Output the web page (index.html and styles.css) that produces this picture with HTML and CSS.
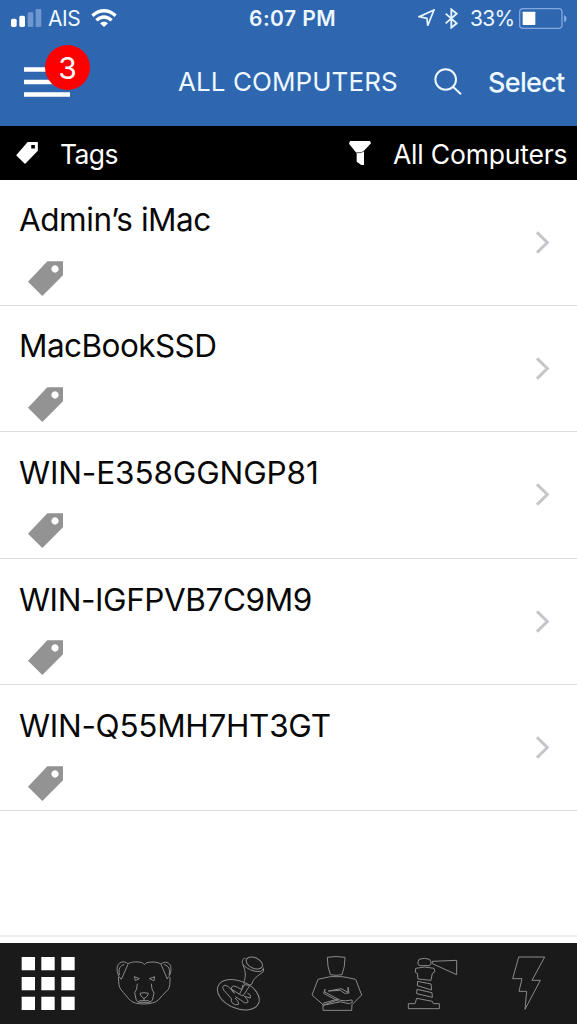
FILE: index.html
```html
<!DOCTYPE html>
<html lang="en">
<head>
<meta charset="utf-8">
<title>All Computers</title>
<link rel="stylesheet" href="styles.css">
</head>
<body>
<svg class="defs" width="0" height="0" aria-hidden="true">
  <symbol id="tag" viewBox="0 0 105 105"><path fill-rule="evenodd" d="M58 1H105V43L43 105L0 62ZM81 13a11 11 0 1 0 .1 0Z"/></symbol>
  <symbol id="chevron" viewBox="0 0 42 69"><path d="M3 4L34 34.500L3 65" fill="none" stroke="#c5c5ca" stroke-width="9"/></symbol>
</svg>
<div class="screen">
  <header class="header">
    <div class="status">
      <div class="status-left">
        <svg class="signal" viewBox="0 0 93 54"><rect y="29" width="17" height="25" rx="5" fill="#fff"/><rect x="25" y="20" width="17" height="34" rx="5" fill="#fff"/><rect x="50" y="10" width="17" height="44" rx="4" fill="#6f97cf"/><rect x="74" width="17" height="54" rx="4" fill="#6f97cf"/></svg>
        <span class="carrier">AIS</span>
        <svg class="wifi" viewBox="0 0 78 54"><g fill="none" stroke="#fff" stroke-width="10"><path d="M4 20Q39-9 74 20"/><path d="M16 34Q39 14 62 34"/></g><path d="M27 43Q39 32 51 43L39 54Z" fill="#fff"/></svg>
      </div>
      <span class="time">6:07 PM</span>
      <div class="status-right">
        <svg class="location" viewBox="0 0 51 54"><path d="M48 3L4 23L27 28L29 50Z" fill="none" stroke="#e6f5ff" stroke-width="5"/></svg>
        <svg class="bluetooth" viewBox="0 0 39 63"><path d="M2 17L35 46L19 59V4L35 17L2 46" fill="none" stroke="#e6f5ff" stroke-width="5.500"/></svg>
        <span class="percent">33%</span>
        <svg class="battery" viewBox="0 0 144 63"><rect x="2" y="2" width="127" height="59" rx="10" fill="none" stroke="#82a8de" stroke-width="4"/><rect x="11" y="11" width="38" height="40" rx="2" fill="#fff"/><path d="M135 21Q143 25 143 32T135 43Z" fill="#82a8de"/></svg>
      </div>
    </div>
    <nav class="nav">
      <div class="menu">
        <svg class="menu-lines" viewBox="0 0 46 31"><path d="M0 2.500H46M0 15H46M0 27.500H46" stroke="#fff" stroke-width="4.500"/></svg>
        <span class="badge">3</span>
      </div>
      <h1 class="title">ALL COMPUTERS</h1>
      <svg class="search" viewBox="0 0 84 80"><g fill="none" stroke="#edf8ff" stroke-width="6"><circle cx="35" cy="34" r="31"/><path d="M57 56L81 78"/></g></svg>
      <span class="select">Select</span>
    </nav>
  </header>
  <div class="filters">
    <svg class="filter-tag" viewBox="0 0 66 67"><path fill-rule="evenodd" fill="#fff" d="M35 0H66V27L27 67L0 40ZM46 9V20H57V9Z"/></svg>
    <span class="tags">Tags</span>
    <svg class="funnel" viewBox="0 0 66 72"><path fill="#fff" d="M3 0H63L66 7L45 29V72H37L23 62V37L0 8Z"/><path d="M22 35L36 35L45 30" fill="none" stroke="#000" stroke-width="2"/></svg>
    <span class="all">All Computers</span>
  </div>
  <main class="list">
    <div class="row"><div class="info"><span class="name n1">Admin’s iMac</span><svg class="tag"><use href="#tag"/></svg></div><svg class="chevron"><use href="#chevron"/></svg></div>
    <div class="row"><div class="info"><span class="name n2">MacBookSSD</span><svg class="tag"><use href="#tag"/></svg></div><svg class="chevron"><use href="#chevron"/></svg></div>
    <div class="row low"><div class="info"><span class="name n3">WIN-E358GGNGP81</span><svg class="tag"><use href="#tag"/></svg></div><svg class="chevron"><use href="#chevron"/></svg></div>
    <div class="row low"><div class="info"><span class="name n4">WIN-IGFPVB7C9M9</span><svg class="tag"><use href="#tag"/></svg></div><svg class="chevron"><use href="#chevron"/></svg></div>
    <div class="row low"><div class="info"><span class="name n5">WIN-Q55MH7HT3GT</span><svg class="tag"><use href="#tag"/></svg></div><svg class="chevron"><use href="#chevron"/></svg></div>
    <div class="row empty"></div>
  </main>
  <footer class="tabs">
    <svg class="tab-grid" viewBox="0 39 300 243"><path fill="#fff" d="M65 81h40v40h-40zM124 81h40v40h-40zM184 81h40v40h-40zM65 141h40v40h-40zM124 141h40v40h-40zM184 141h40v40h-40zM65 200h40v40h-40zM124 200h40v40h-40zM184 200h40v40h-40z"/></svg>
    <svg class="tab" viewBox="0 9 285 243"><path d="M64 118C53 108 50 93 52 80C55 66 71 61 84 71C97 64 115 65 127 68L133 74L140 68C157 64 173 66 183 72C196 62 209 68 212 79C215 95 210 108 200 117M64 118L84 73M202 117L183 73M59 105C53 88 61 75 73 74M207 105C212 88 205 76 192 74M55 111C57 129 55 139 63 149C73 160 82 173 92 182Q103 192 132 192Q162 191 174 181Q185 168 205 148Q211 137 210 111M103 110L118 116L106 122ZM164 110L148 116L162 122ZM112 131Q112 149 104 158L109 181L116 187H149L157 181L162 159Q154 149 154 131M120 160Q132 156 145 160L142 168L132 176L123 168ZM132 176V183M115 185L120 182H145L150 186"/></svg>
    <svg class="tab" viewBox="0 9 285 243"><ellipse cx="130" cy="164" rx="66" ry="41" transform="rotate(23 130 164)"/><ellipse cx="178" cy="69" rx="26" ry="16" transform="rotate(26 178 69)"/><path d="M152 55C143 53 138 65 145 75Q165 95 195 95Q206 91 205 83M143 74C153 93 153 111 146 128C145 137 167 137 171 132C173 116 190 107 205 95L206 86M148 134L133 163L144 168L164 137M144 134L140 149Q126 139 116 138Q107 141 109 147L132 162M109 147L118 160Q98 133 87 136Q79 141 86 150L110 177Q106 184 113 190Q121 197 131 193Q132 184 120 174M121 170L140 182Q149 192 158 188Q162 182 148 169L166 174Q170 164 157 159"/></svg>
    <svg class="tab" viewBox="0 9 285 243"><path d="M112 52Q138 47 165 52L163 79L156 104Q138 108 121 104L114 79ZM121 110H156Q170 112 197 118L215 165L186 194L185 211H99V194L66 165L84 118ZM105 147L101 160L148 185L178 191L187 187L186 180Q165 184 151 181L104 156ZM115 153L153 146L174 157V142M115 153L151 151L164 160L177 159L174 142M99 196L145 179M99 190L143 177M99 196L148 186"/></svg>
    <svg class="tab" viewBox="0 9 285 243"><path d="M102 58Q118 52 134 58L138 66V73L132 77H105L99 73V66ZM142 64L215 61V104L142 71ZM92 85Q119 77 147 85L150 95L142 100L138 121L99 117L97 100L91 97ZM98 124L138 132L140 150L97 137ZM96 148L141 158L142 172L95 161ZM95 175L142 184L145 191H163V206H70V191H90Z"/></svg>
    <svg class="tab-last" viewBox="0 9 291 243"><path d="M116 51H194L156 121H181L135 208L140 154H117L126 116H98Z"/></svg>
  </footer>
</div>
</body>
</html>
```
FILE: styles.css
```css
* { box-sizing: border-box; }
body { margin: 0; font-family: Inter, "Liberation Sans", sans-serif; }
svg { display: block; flex: none; }
.defs { position: absolute; }
.screen { width: 577px; height: 1024px; display: flex; flex-direction: column; background: #fff; overflow: hidden; }
span, h1 { white-space: nowrap; }
.header { height: 126px; background: #2e66b0; color: #edf8ff; }
.status { height: 37px; display: grid; grid-template-columns: 249px 1fr 159px; align-items: center; }
.status-left, .status-right { display: flex; align-items: center; }
.status-left { padding-left: 11px; }
.signal { width: 31px; height: 18px; margin-top: -1px; }
.carrier { width: 43px; margin-left: 6px; font-size: 21px; letter-spacing: -.4px; line-height: 36px; }
.wifi { width: 26px; height: 18px; margin-top: -1px; }
.time { font-size: 21px; font-weight: 600; letter-spacing: .45px; }
.location { width: 17px; height: 18px; margin-top: -1px; }
.bluetooth { width: 13px; height: 21px; margin-left: 10px; }
.percent { width: 48px; margin-left: 12px; font-size: 21px; letter-spacing: -.7px; }
.battery { width: 48px; height: 21px; margin-left: 1px; }
.nav { height: 89px; display: flex; align-items: center; }
.menu { position: relative; width: 154px; height: 89px; padding: 30px 0 0 24px; }
.menu-lines { width: 46px; height: 31px; }
.badge { position: absolute; left: 45px; top: 8px; width: 45px; height: 45px; border-radius: 50%; background: #fe0000; color: #fff; font-size: 30px; line-height: 46px; text-align: center; }
.title { width: 256px; margin: 0 0 0 24px; font-size: 26px; font-weight: 400; letter-spacing: .07px; line-height: 90px; }
.search { width: 28px; height: 27px; margin-top: -1px; }
.select { margin: 2px 0 0 26px; font-size: 27px; font-weight: 500; letter-spacing: -.7px; }
.filters { height: 54px; display: flex; align-items: center; padding: 1px 0 0 16px; background: #000; color: #fff; font-size: 26.500px; }
.filter-tag { width: 22px; height: 22px; margin-top: -2px; }
.tags { width: 290px; margin: 1px 0 0 22px; letter-spacing: -.6px; }
.funnel { width: 22px; height: 24px; margin: -1px 0 0 -1px; }
.all { margin: 1px 0 0 22px; letter-spacing: -.18px; }
.list { height: 763px; overflow: hidden; }
.row { height: 126.2px; display: flex; justify-content: space-between; border-bottom: 1px solid #dedede; padding: 20px 27px 0 19px; color: #080808; }
.low { padding-top: 21px; }
.empty { border-bottom: 2px solid #ededed; }
.info { display: flex; flex-direction: column; }
.name { height: 40px; line-height: 40px; font-size: 31.500px; }
.n1 { letter-spacing: -.45px; }
.n2 { letter-spacing: -.55px; }
.n3 { letter-spacing: -.12px; }
.n4 { letter-spacing: -.42px; }
.n5 { letter-spacing: -.28px; }
.tag { width: 35px; height: 35px; margin: 21px 0 0 9px; fill: #939393; }
.low .tag { margin-top: 20px; }
.chevron { width: 14px; height: 23px; margin-top: 31px; }
.low .chevron { margin-top: 30px; }
.tabs { height: 81px; display: flex; background: #1a1a1a; }
.tab, .tab-last { height: 81px; width: 95px; fill: none; stroke: #8a8a8a; stroke-width: 3; }
.tab-last { width: 97px; }
.tab-grid { width: 100px; height: 81px; }
```
